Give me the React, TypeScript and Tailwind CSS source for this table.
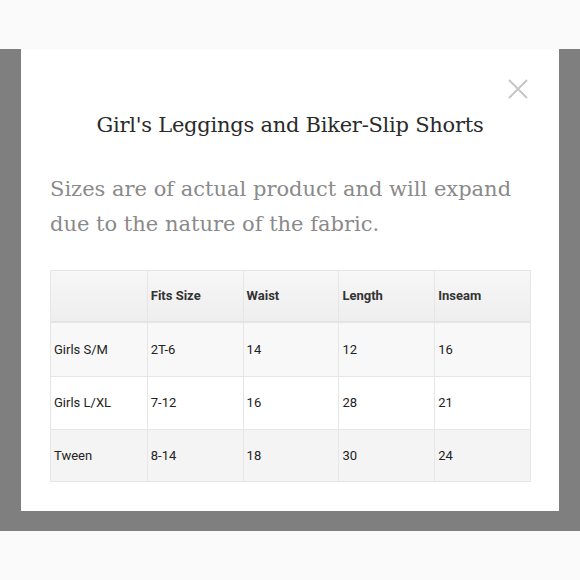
import React from 'react';

const rows = [
  ['Girls S/M', '2T-6', '14', '12', '16'],
  ['Girls L/XL', '7-12', '16', '28', '21'],
  ['Tween', '8-14', '18', '30', '24'],
];

const headers = ['', 'Fits Size', 'Waist', 'Length', 'Inseam'];
const rowBg = ['bg-[#f8f8f8]', 'bg-white', 'bg-[#f4f4f4]'];
const rowH = ['h-[53px]', 'h-[53px]', 'h-[52px]'];

export default function App() {
  return (
    <div className="w-[580px] h-[580px] flex flex-col bg-[#fafafa] overflow-hidden">
      <div className="h-[49px] shrink-0" />
      <div className="h-[482px] shrink-0 bg-[#7f7f7f] pl-[21px] pr-[21px]">
        {/* modal */}
        <div className="relative h-[462px] bg-white pt-[108px]">
          <button className="absolute right-[30px] top-[29px] w-[22px] h-[22px] flex items-center justify-center">
            <svg width="20" height="20" viewBox="0 0 20 20">
              <path d="M1 1 L19 19 M19 1 L1 19" stroke="#c6c6c6" strokeWidth="2" />
            </svg>
          </button>

          <h1
            className="absolute left-0 right-0 top-[61px] text-center text-[21px] leading-[30px] tracking-[-0.25px] text-[#2a2a2a]"
            style={{ fontFamily: '"DejaVu Serif", serif' }}
          >
            Girl's Leggings and Biker-Slip Shorts
          </h1>

          <p
            className="px-[29px] text-[21px] leading-[35px] tracking-[0px] text-[#8a8a8a] mt-[15px]"
            style={{ fontFamily: '"DejaVu Serif", serif' }}
          >
            Sizes are of actual product and will expand due to the nature of the fabric.
          </p>

          <div className="mt-[28px] ml-[29px] w-[481px] border border-[#e6e6e6]">
            <div className="grid grid-cols-5 h-[52px] bg-gradient-to-b from-[#f7f7f7] to-[#eeeeee] border-b-2 border-[#e4e4e4]">
              {headers.map((h, i) => (
                <div
                  key={i}
                  className={`flex items-center pl-[3px] text-[13px] font-bold text-[#333] ${i > 0 ? 'border-l border-[#e6e6e6]' : ''}`}
                  style={{ fontFamily: 'Roboto, sans-serif' }}
                >
                  {h}
                </div>
              ))}
            </div>
            {rows.map((r, ri) => (
              <div key={ri} className={`grid grid-cols-5 ${rowH[ri]} ${rowBg[ri]} ${ri > 0 ? 'border-t border-[#e6e6e6]' : ''}`}>
                {r.map((c, ci) => (
                  <div
                    key={ci}
                    className={`flex items-center pl-[3px] text-[13px] text-[#222] ${ci > 0 ? 'border-l border-[#e6e6e6]' : ''}`}
                    style={{ fontFamily: 'Roboto, sans-serif' }}
                  >
                    {c}
                  </div>
                ))}
              </div>
            ))}
          </div>
        </div>
      </div>
    </div>
  );
}
